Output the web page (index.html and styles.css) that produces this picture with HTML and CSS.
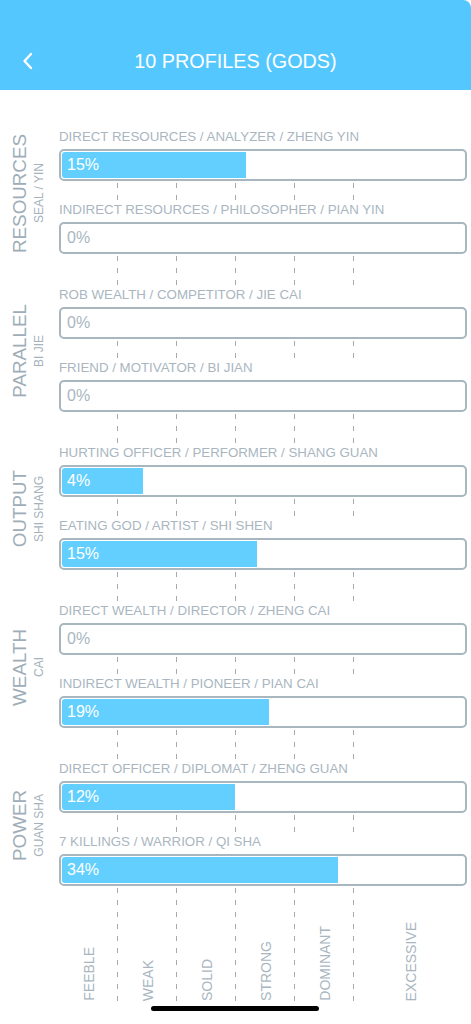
FILE: index.html
```html
<!DOCTYPE html>
<html>
<head>
<meta charset="utf-8">
<link rel="stylesheet" href="styles.css">
</head>
<body>
<header class="nav">
  <div class="back">
    <svg width="14" height="18" viewBox="0 0 14 18"><path d="M10 2 L3.5 9 L10 16" fill="none" stroke="#fff" stroke-width="2.4" stroke-linecap="round" stroke-linejoin="round"/></svg>
  </div>
  <h1 class="title">10 PROFILES (GODS)</h1>
  <div></div>
</header>

<main class="content">
  <section class="group">
    <div class="side"><span class="side-main">RESOURCES</span><span class="side-sub">SEAL / YIN</span></div>
    <div class="items">
      <div class="item">
        <div class="label">DIRECT RESOURCES / ANALYZER / ZHENG YIN</div>
        <div class="bar"><div class="fill" style="width:184px"></div><span class="pct on">15%</span></div>
      </div>
      <div class="ticks short"><span></span><span></span><span></span><span></span><span></span><span class="last"></span></div>
      <div class="item">
        <div class="label">INDIRECT RESOURCES / PHILOSOPHER / PIAN YIN</div>
        <div class="bar"><div class="fill" style="width:0px"></div><span class="pct">0%</span></div>
      </div>
    </div>
  </section>
  <div class="ticks long offset"><span></span><span></span><span></span><span></span><span></span><span class="last"></span></div>

  <section class="group">
    <div class="side"><span class="side-main">PARALLEL</span><span class="side-sub">BI JIE</span></div>
    <div class="items">
      <div class="item">
        <div class="label">ROB WEALTH / COMPETITOR / JIE CAI</div>
        <div class="bar"><div class="fill" style="width:0px"></div><span class="pct">0%</span></div>
      </div>
      <div class="ticks short"><span></span><span></span><span></span><span></span><span></span><span class="last"></span></div>
      <div class="item">
        <div class="label">FRIEND / MOTIVATOR / BI JIAN</div>
        <div class="bar"><div class="fill" style="width:0px"></div><span class="pct">0%</span></div>
      </div>
    </div>
  </section>
  <div class="ticks long offset"><span></span><span></span><span></span><span></span><span></span><span class="last"></span></div>

  <section class="group">
    <div class="side"><span class="side-main">OUTPUT</span><span class="side-sub">SHI SHANG</span></div>
    <div class="items">
      <div class="item">
        <div class="label">HURTING OFFICER / PERFORMER / SHANG GUAN</div>
        <div class="bar"><div class="fill" style="width:81px"></div><span class="pct on">4%</span></div>
      </div>
      <div class="ticks short"><span></span><span></span><span></span><span></span><span></span><span class="last"></span></div>
      <div class="item">
        <div class="label">EATING GOD / ARTIST / SHI SHEN</div>
        <div class="bar"><div class="fill" style="width:195px"></div><span class="pct on">15%</span></div>
      </div>
    </div>
  </section>
  <div class="ticks long offset"><span></span><span></span><span></span><span></span><span></span><span class="last"></span></div>

  <section class="group">
    <div class="side"><span class="side-main">WEALTH</span><span class="side-sub">CAI</span></div>
    <div class="items">
      <div class="item">
        <div class="label">DIRECT WEALTH / DIRECTOR / ZHENG CAI</div>
        <div class="bar"><div class="fill" style="width:0px"></div><span class="pct">0%</span></div>
      </div>
      <div class="ticks short"><span></span><span></span><span></span><span></span><span></span><span class="last"></span></div>
      <div class="item">
        <div class="label">INDIRECT WEALTH / PIONEER / PIAN CAI</div>
        <div class="bar"><div class="fill" style="width:207px"></div><span class="pct on">19%</span></div>
      </div>
    </div>
  </section>
  <div class="ticks long offset"><span></span><span></span><span></span><span></span><span></span><span class="last"></span></div>

  <section class="group">
    <div class="side"><span class="side-main">POWER</span><span class="side-sub">GUAN SHA</span></div>
    <div class="items">
      <div class="item">
        <div class="label">DIRECT OFFICER / DIPLOMAT / ZHENG GUAN</div>
        <div class="bar"><div class="fill" style="width:173px"></div><span class="pct on">12%</span></div>
      </div>
      <div class="ticks short"><span></span><span></span><span></span><span></span><span></span><span class="last"></span></div>
      <div class="item">
        <div class="label">7 KILLINGS / WARRIOR / QI SHA</div>
        <div class="bar"><div class="fill" style="width:276px"></div><span class="pct on">34%</span></div>
      </div>
    </div>
  </section>
  <div class="ticks scale offset">
    <span><em>FEEBLE</em></span>
    <span><em>WEAK</em></span>
    <span><em>SOLID</em></span>
    <span><em>STRONG</em></span>
    <span><em>DOMINANT</em></span>
    <span class="last"><em>EXCESSIVE</em></span>
  </div>
</main>
<div class="home-indicator"></div>
</body>
</html>
```

FILE: styles.css
```css
* { box-sizing: border-box; }
html, body { margin: 0; padding: 0; background: #fff; }
body {
  width: 471px;
  font-family: "Liberation Sans", Arial, Helvetica, sans-serif;
  color: #a9b6bf;
}

.nav {
  height: 90px;
  background: #54c7fe;
  border-top-right-radius: 8px;
  display: grid;
  grid-template-columns: 55px 1fr 55px;
  align-items: end;
  padding-bottom: 17px;
}
.back {
  display: flex;
  justify-content: center;
  align-items: center;
  height: 24px;
}
.back svg { display: block; }
.title {
  margin: 0;
  text-align: center;
  color: #fff;
  font-weight: normal;
  font-size: 19.8px;
  line-height: 24px;
}

.content {
  padding-top: 39px;
}

.group {
  display: flex;
}
.side {
  width: 59px;
  flex: none;
  contain: size;
  display: flex;
  justify-content: center;
  align-items: center;
  gap: 2px;
  padding-top: 3px;
}
.side-main, .side-sub {
  writing-mode: vertical-rl;
  transform: rotate(180deg);
  white-space: nowrap;
}
.side-main {
  font-size: 18.8px;
  line-height: 22px;
  color: #9eadb7;
  margin-left: -4px;
}
.side-sub {
  font-size: 12px;
  line-height: 13px;
  color: #a5b2bb;
}

.items {
  width: 408px;
}
.label {
  font-size: 13.3px;
  line-height: 16px;
  height: 16px;
  margin-bottom: 4px;
  white-space: nowrap;
  color: #a9b6bf;
}
.bar {
  height: 32px;
  width: 408px;
  border: 2px solid #a8b6bf;
  border-radius: 5px;
  padding: 1px;
  display: grid;
  grid-template-columns: 1fr;
  grid-template-rows: 1fr;
  background: #fff;
}
.fill, .pct { grid-area: 1 / 1; }
.fill {
  justify-self: start;
  height: 26px;
  background: #62cffe;
  border-radius: 3px 0 0 3px;
}
.pct {
  align-self: center;
  padding-left: 5px;
  font-size: 16px;
  line-height: 26px;
  color: #a9b6bf;
}
.pct.on { color: #fff; }

.ticks {
  display: grid;
  grid-template-columns: repeat(5, 59px) 1fr;
}
.ticks.offset { margin-left: 59px; width: 408px; }
.ticks.short { height: 21px; }
.ticks.long { height: 33px; }
.ticks.scale { height: 116px; }
.ticks > span {
  background-image: linear-gradient(to bottom, #a2abb1 5px, transparent 5px);
  background-size: 1px 12px;
  background-repeat: repeat-y;
  background-position: right 2px;
}
.ticks > span.last { background: none; }

.scale > span {
  display: flex;
  justify-content: center;
  align-items: flex-end;
  padding-bottom: 1px;
  background-size: 1px 12px;
}
.scale em {
  font-style: normal;
  writing-mode: vertical-rl;
  transform: rotate(180deg);
  font-size: 14px;
  line-height: 16px;
  color: #a9b6bf;
  white-space: nowrap;
}

.home-indicator {
  position: fixed;
  left: 151px;
  bottom: 13px;
  width: 168px;
  height: 5px;
  border-radius: 3px;
  background: #000;
}
```
